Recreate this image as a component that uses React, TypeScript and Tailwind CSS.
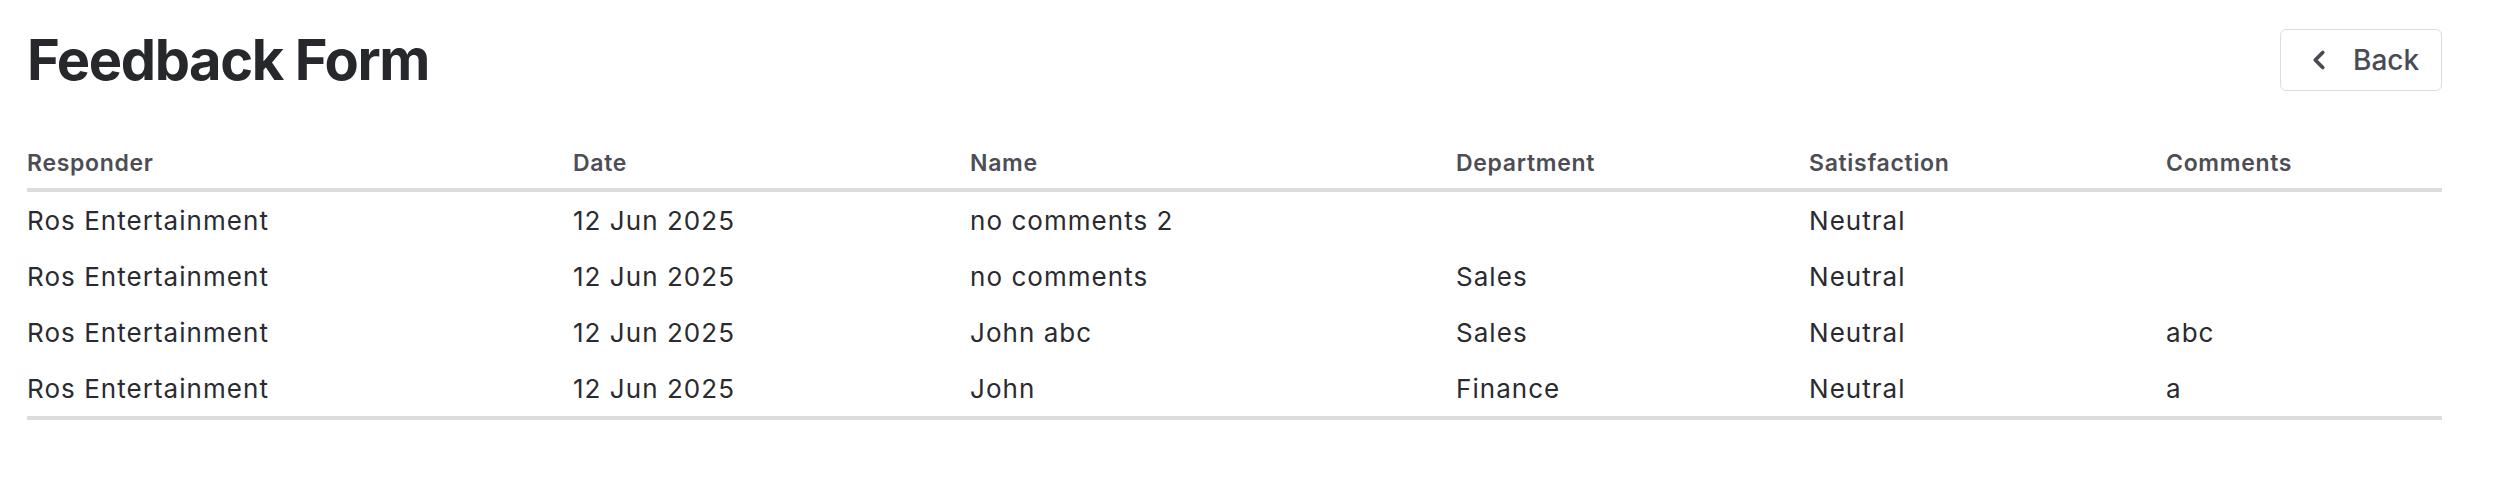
import React from "react";
import { ChevronLeft } from "lucide-react";

const rows = [
  ["Ros Entertainment", "12 Jun 2025", "no comments 2", "", "Neutral", ""],
  ["Ros Entertainment", "12 Jun 2025", "no comments", "Sales", "Neutral", ""],
  ["Ros Entertainment", "12 Jun 2025", "John abc", "Sales", "Neutral", "abc"],
  ["Ros Entertainment", "12 Jun 2025", "John", "Finance", "Neutral", "a"],
];

const headers = ["Responder", "Date", "Name", "Department", "Satisfaction", "Comments"];

export default function App() {
  return (
    <div
      className="min-h-[484px] bg-white pl-[27px] pr-[56px] pt-[29px]"
      style={{ fontFamily: "Inter, 'Noto Sans', sans-serif" }}
    >
      <div className="flex items-center justify-between h-[62px]">
        <h1 className="text-[56px] leading-none font-bold text-[#27282c] tracking-[-0.025em]">
          Feedback Form
        </h1>
        <button className="flex items-center h-[62px] w-[162px] pl-[23px] gap-[19px] border-[1.5px] border-[#dcdcdc] rounded-[6px] text-[28px] font-medium text-[#4a4b53] bg-white">
          <ChevronLeft size={30} strokeWidth={3} />
          <span>Back</span>
        </button>
      </div>

      <div className="mt-[55px] border-b-4 border-[#dcdcdc]">
        <div className="grid grid-cols-[546px_397px_486px_353px_357px_276px] border-b-4 border-[#dcdcdc] pb-[8px]">
          {headers.map((h) => (
            <div
              key={h}
              className="text-[23px] leading-[34px] font-semibold text-[#4d4e55] tracking-[0.03em]"
            >
              {h}
            </div>
          ))}
        </div>
        {rows.map((r, i) => (
          <div
            key={i}
            className="grid grid-cols-[546px_397px_486px_353px_357px_276px] h-[56px] items-center"
          >
            {r.map((c, j) => (
              <div
                key={j}
                className="text-[26px] leading-[39px] text-[#2a2b30] tracking-[0.04em]"
              >
                {c}
              </div>
            ))}
          </div>
        ))}
      </div>
    </div>
  );
}
